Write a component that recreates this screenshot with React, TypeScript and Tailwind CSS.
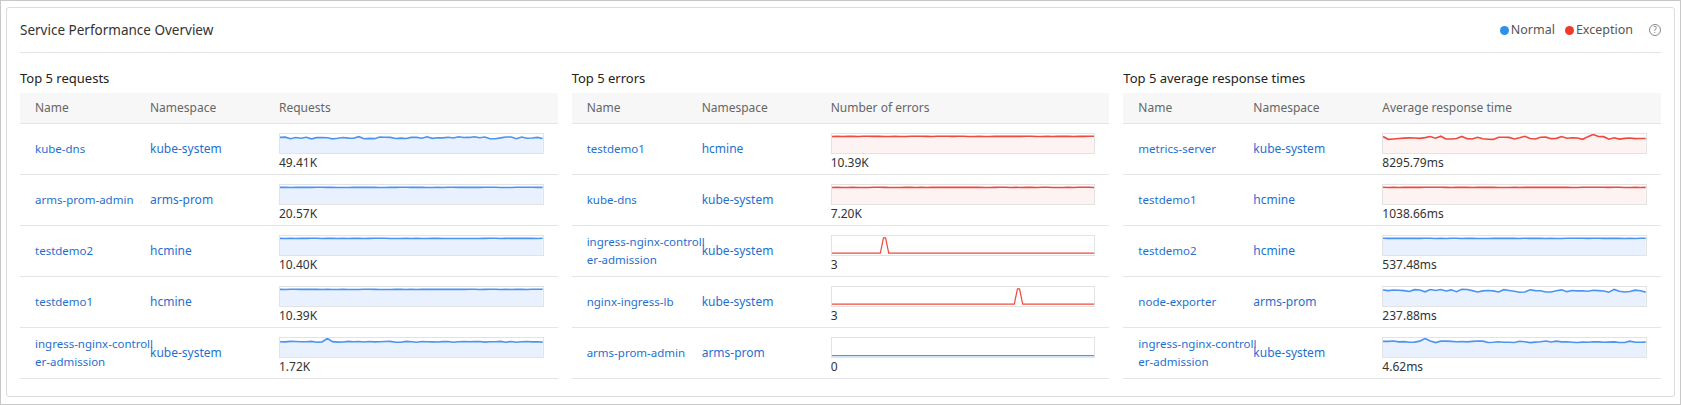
import React from "react";

type Row = { name: string[]; ns: string; value: string; kind: "wave" | "flat" | "spike" | "zero"; color: "blue" | "red"; amp?: number; spikeAt?: number; bumpAt?: number };

function rng(seed: number) {
  let s = seed;
  return () => {
    s = (s * 9301 + 49297) % 233280;
    return s / 233280;
  };
}

function Spark({ row, seed }: { row: Row; seed: number }) {
  const W = 250, H = 20;
  const stroke = row.color === "blue" ? "#4b94f3" : "#f0493c";
  const fill = row.color === "blue" ? "#e8f1fd" : "#fdf3f2";
  let pts: [number, number][] = [];
  const r = rng(seed);
  if (row.kind === "wave") {
    const amp = row.amp ?? 1.5;
    for (let i = 0; i <= 50; i++) {
      let y = 4 + (r() - 0.5) * amp * 2;
      if (row.bumpAt !== undefined && Math.abs(i - row.bumpAt) < 1) y = 0.5;
      pts.push([(i / 50) * W, y]);
    }
  } else if (row.kind === "flat") {
    for (let i = 0; i <= 50; i++) pts.push([(i / 50) * W, 2.5 + (r() - 0.5) * 0.3]);
  } else if (row.kind === "spike") {
    const s = row.spikeAt ?? 0.2;
    pts = [[0, 18], [W * s - 4, 18], [W * s - 1, 2], [W * s + 1, 2], [W * s + 4, 18], [W, 18]];
  } else {
    pts = [[0, 18.5], [W, 18.5]];
  }
  const line = pts.map((p, i) => `${i ? "L" : "M"}${p[0].toFixed(1)},${p[1].toFixed(1)}`).join(" ");
  const area = `${line} L${W},${H} L0,${H} Z`;
  return (
    <div className="h-[21px] border border-[#e3e3e3] bg-white">
      <svg viewBox={`0 0 ${W} ${H}`} preserveAspectRatio="none" className="block h-full w-full">
        {(row.kind === "wave" || row.kind === "flat") && <path d={area} fill={fill} />}
        <path d={line} fill="none" stroke={stroke} strokeWidth={row.kind === "spike" || row.kind === "zero" ? 1.2 : 1.6} vectorEffect="non-scaling-stroke" />
      </svg>
    </div>
  );
}

const tables: { title: string; col: string; rows: Row[] }[] = [
  {
    title: "Top 5 requests",
    col: "Requests",
    rows: [
      { name: ["kube-dns"], ns: "kube-system", value: "49.41K", kind: "wave", color: "blue", amp: 1.2 },
      { name: ["arms-prom-admin"], ns: "arms-prom", value: "20.57K", kind: "flat", color: "blue" },
      { name: ["testdemo2"], ns: "hcmine", value: "10.40K", kind: "flat", color: "blue" },
      { name: ["testdemo1"], ns: "hcmine", value: "10.39K", kind: "flat", color: "blue" },
      { name: ["ingress-nginx-controll", "er-admission"], ns: "kube-system", value: "1.72K", kind: "wave", color: "blue", amp: 0.5, bumpAt: 9 },
    ],
  },
  {
    title: "Top 5 errors",
    col: "Number of errors",
    rows: [
      { name: ["testdemo1"], ns: "hcmine", value: "10.39K", kind: "flat", color: "red" },
      { name: ["kube-dns"], ns: "kube-system", value: "7.20K", kind: "flat", color: "red" },
      { name: ["ingress-nginx-controll", "er-admission"], ns: "kube-system", value: "3", kind: "spike", color: "red", spikeAt: 0.2 },
      { name: ["nginx-ingress-lb"], ns: "kube-system", value: "3", kind: "spike", color: "red", spikeAt: 0.71 },
      { name: ["arms-prom-admin"], ns: "arms-prom", value: "0", kind: "zero", color: "blue" },
    ],
  },
  {
    title: "Top 5 average response times",
    col: "Average response time",
    rows: [
      { name: ["metrics-server"], ns: "kube-system", value: "8295.79ms", kind: "wave", color: "red", amp: 1.8, bumpAt: 40 },
      { name: ["testdemo1"], ns: "hcmine", value: "1038.66ms", kind: "flat", color: "red" },
      { name: ["testdemo2"], ns: "hcmine", value: "537.48ms", kind: "flat", color: "blue" },
      { name: ["node-exporter"], ns: "arms-prom", value: "237.88ms", kind: "wave", color: "blue", amp: 1.6 },
      { name: ["ingress-nginx-controll", "er-admission"], ns: "kube-system", value: "4.62ms", kind: "wave", color: "blue", amp: 0.9, bumpAt: 8 },
    ],
  },
];

export default function App() {
  return (
    <div className="h-[405px] w-[1681px] border border-[#c8c8c8] bg-white p-[5px] pt-[6px] text-[12px] text-[#333]" style={{ fontFamily: '"Noto Sans","Open Sans",sans-serif' }}>
      <div className="h-[390px] rounded-[3px] border border-[#dcdcdc] px-[13px]">
        <div className="flex h-[45px] items-center justify-between border-b border-[#e3e3e3]">
          <span className="text-[13.5px] text-[#333]">Service Performance Overview</span>
          <div className="flex items-center gap-[10px] text-[12.5px] text-[#555]">
            <span className="flex items-center gap-[2px]"><span className="h-[9px] w-[9px] rounded-full bg-[#2f8fe9]" />Normal</span>
            <span className="flex items-center gap-[2px]"><span className="h-[9px] w-[9px] rounded-full bg-[#f0392b]" />Exception</span>
            <span className="ml-[6px] flex h-[12px] w-[12px] items-center justify-center rounded-full border border-[#888] text-[8px] leading-none text-[#777]">?</span>
          </div>
        </div>
        <div className="mt-[16px] grid grid-cols-3 gap-[14px]">
          {tables.map((t, ti) => (
            <div key={t.title} className="min-w-0">
              <div className="mb-[6px] text-[13px] leading-[18px] text-[#222]">{t.title}</div>
              <div className="flex h-[31px] items-center border-b border-[#e5e5e5] bg-[#f7f7f7] text-[#666]">
                <div className="w-[130px] shrink-0 pl-[15px]">Name</div>
                <div className="w-[129px] shrink-0">Namespace</div>
                <div className="min-w-0 flex-1">{t.col}</div>
              </div>
              {t.rows.map((r, ri) => (
                <div key={ri} className="flex h-[51px] items-center border-b border-[#e5e5e5]">
                  <div className="w-[130px] shrink-0 whitespace-nowrap pl-[15px] text-[11.5px] leading-[18px] text-[#1f6fcf]">{r.name.map((n) => <div key={n}>{n}</div>)}</div>
                  <div className="w-[129px] shrink-0 whitespace-nowrap text-[#1f6fcf]">{r.ns}</div>
                  <div className="min-w-0 flex-1 pr-[14px] pt-[6px]">
                    <Spark row={r} seed={ti * 10 + ri + 3} />
                    <div className="leading-[17px] text-[#333]">{r.value}</div>
                  </div>
                </div>
              ))}
            </div>
          ))}
        </div>
      </div>
    </div>
  );
}
